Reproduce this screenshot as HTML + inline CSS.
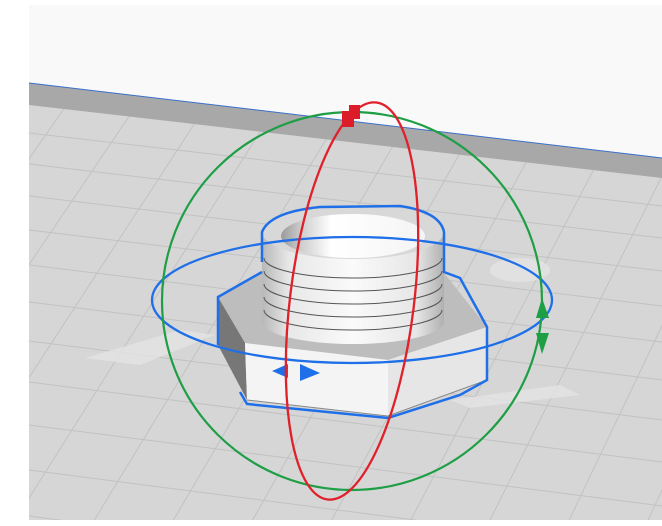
<!DOCTYPE html>
<html><head><meta charset="utf-8"><style>
html,body{margin:0;padding:0;background:#fff;width:662px;height:526px;overflow:hidden}
svg{display:block}
</style></head><body>
<svg width="662" height="526" viewBox="0 0 662 526" xmlns="http://www.w3.org/2000/svg">
<defs>
<clipPath id="floor"><polygon points="29,105 662,178 662,520 29,520"/></clipPath>
<linearGradient id="cyl" x1="0" x2="1" y1="0" y2="0">
<stop offset="0" stop-color="#b8b8b8"/><stop offset="0.15" stop-color="#e8e8e8"/><stop offset="0.5" stop-color="#fafafa"/><stop offset="0.85" stop-color="#e6e6e6"/><stop offset="1" stop-color="#b0b0b0"/>
</linearGradient>
<linearGradient id="hole" x1="0" x2="1" y1="0" y2="0">
<stop offset="0" stop-color="#9a9a9a"/><stop offset="0.15" stop-color="#d0d0d0"/><stop offset="0.35" stop-color="#ffffff"/><stop offset="1" stop-color="#f4f4f4"/>
</linearGradient>
</defs>
<rect x="29" y="5" width="633" height="515" fill="#f9f9f9"/>
<polygon points="29,83 662,158 662,520 29,520" fill="#d6d6d6"/>
<polygon points="29,83 662,158 662,178 29,105" fill="#a8a8a8"/>
<line x1="29" y1="83" x2="662" y2="158" stroke="#3b6fc8" stroke-width="1"/>
<g clip-path="url(#floor)" stroke="#c2c2c2" stroke-width="1">
<line x1="29" y1="133" x2="662" y2="206"/>
<line x1="29" y1="164" x2="662" y2="238"/>
<line x1="29" y1="196" x2="662" y2="271"/>
<line x1="29" y1="230" x2="662" y2="306"/>
<line x1="29" y1="265" x2="662" y2="342"/>
<line x1="29" y1="302" x2="662" y2="380"/>
<line x1="29" y1="341" x2="662" y2="420"/>
<line x1="29" y1="382" x2="662" y2="462"/>
<line x1="29" y1="425" x2="662" y2="506"/>
<line x1="29" y1="470" x2="662" y2="552"/>
<line x1="29" y1="516" x2="662" y2="600"/>
<line x1="70" y1="100" x2="-250" y2="560"/>
<line x1="140" y1="100" x2="-170" y2="560"/>
<line x1="210" y1="100" x2="-90" y2="560"/>
<line x1="280" y1="100" x2="-10" y2="560"/>
<line x1="350" y1="100" x2="70" y2="560"/>
<line x1="420" y1="100" x2="150" y2="560"/>
<line x1="490" y1="100" x2="230" y2="560"/>
<line x1="560" y1="100" x2="310" y2="560"/>
<line x1="630" y1="100" x2="390" y2="560"/>
<line x1="700" y1="100" x2="470" y2="560"/>
<line x1="770" y1="100" x2="550" y2="560"/>
<line x1="840" y1="100" x2="630" y2="560"/>
<line x1="910" y1="100" x2="710" y2="560"/>
</g>
<g fill="#e4e4e4" opacity="0.8">
<polygon points="85,358 180,330 215,335 140,365"/>
<polygon points="450,400 560,385 580,395 470,408"/>
<ellipse cx="520" cy="270" rx="30" ry="12"/>
</g>
<polygon points="218,297 262,273 444,273 487,327 388,360 245,343" fill="#bdbdbd"/>
<polygon points="218,297 245,343 247,400 218,345" fill="#777"/>
<polygon points="245,343 388,360 388,416 247,400" fill="#f4f4f4"/>
<polygon points="388,360 487,327 487,380 388,416" fill="#e6e6e6"/>
<line x1="247" y1="400" x2="388" y2="416" stroke="#888"/>
<line x1="388" y1="416" x2="487" y2="380" stroke="#888"/>
<path d="M262,232 L262,322 A91,22 0 0 0 444,322 L444,232 Z" fill="url(#cyl)"/>
<g fill="none" stroke="#555" stroke-width="1">
<path d="M264,258 A89,20 0 0 0 442,258"/>
<path d="M264,271 A89,20 0 0 0 442,271"/>
<path d="M264,284 A89,20 0 0 0 442,284"/>
<path d="M264,297 A89,20 0 0 0 442,297"/>
<path d="M264,310 A89,20 0 0 0 442,310"/>
</g>
<ellipse cx="353" cy="232" rx="91" ry="27" fill="#d8d8d8"/>
<ellipse cx="353" cy="236" rx="72" ry="22" fill="url(#hole)"/>
<path d="M262,262 L262,232 Q270,212 320,207 L400,206 Q440,212 444,232 L444,272 L460,278 L487,327 L487,380 L460,395 L388,418 L247,404 L240,392 M218,345 L218,297 L262,272" fill="none" stroke="#1f6fe8" stroke-width="2.5"/>
<ellipse cx="352" cy="300" rx="200" ry="63" fill="none" stroke="#1f6fe8" stroke-width="2.3"/>
<polygon points="288,364 272,371 288,378" fill="#1f6fe8"/>
<polygon points="300,364 320,373 300,381" fill="#1f6fe8"/>
<ellipse cx="352" cy="301" rx="190" ry="189" fill="none" stroke="#1e9e45" stroke-width="2.2"/>
<polygon points="536,318 542,298 549,318" fill="#1e9e45"/>
<polygon points="536,333 542,354 549,333" fill="#1e9e45"/>
<ellipse cx="352" cy="301" rx="62" ry="200" transform="rotate(7 352 301)" fill="none" stroke="#e0202a" stroke-width="2.3"/>
<rect x="342" y="111" width="12" height="16" fill="#dc1c28"/>
<rect x="349" y="105" width="11" height="14" fill="#dc1c28"/>
</svg>
</body></html>
